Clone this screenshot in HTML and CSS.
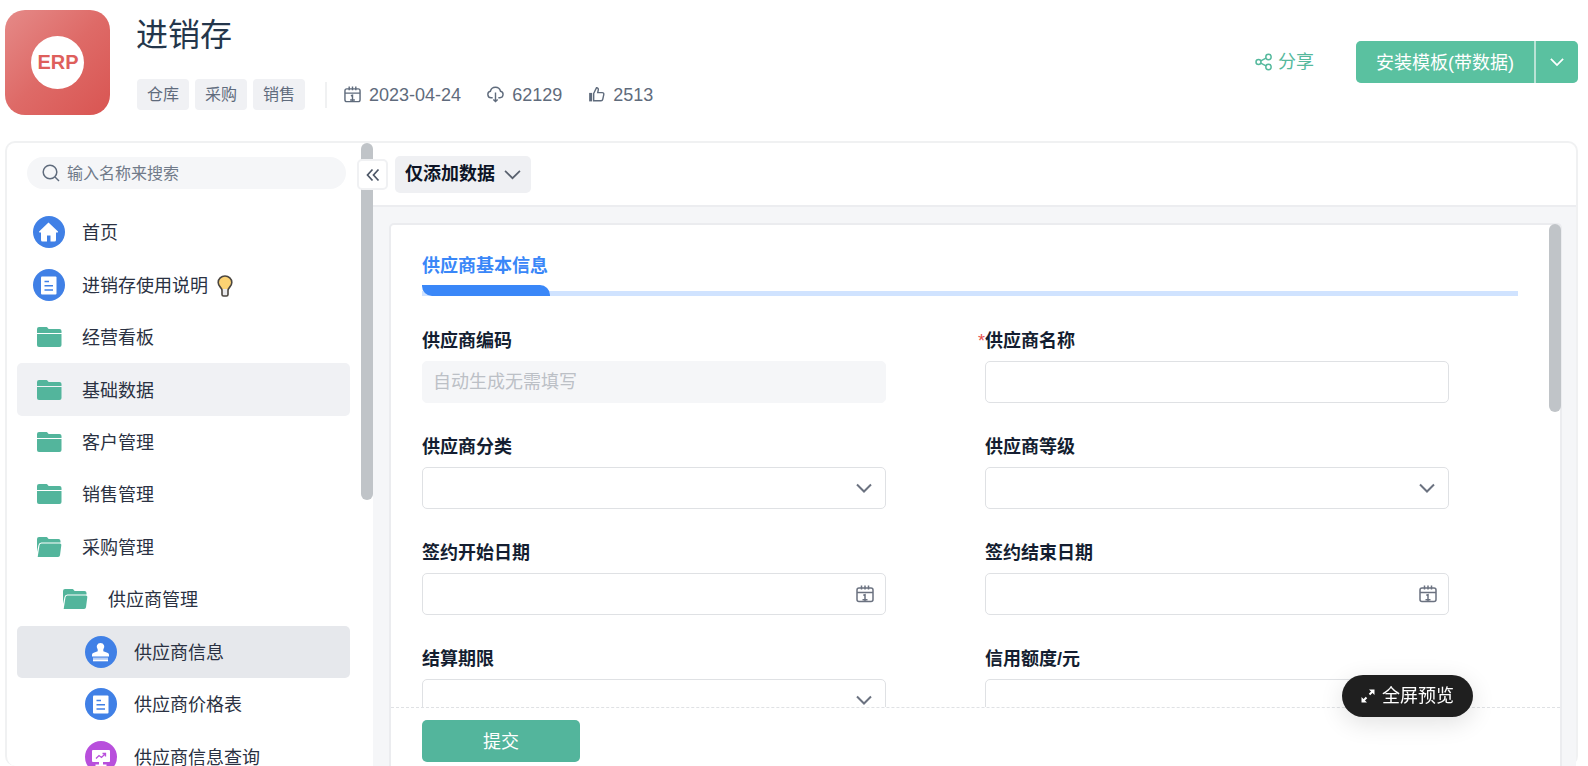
FILE: index.html
```html
<!DOCTYPE html>
<html lang="zh-CN">
<head>
<meta charset="utf-8">
<title>进销存</title>
<link rel="stylesheet" href="styles.css">
</head>
<body>
<svg class="sprite" aria-hidden="true">
  <symbol id="calendar" viewBox="0 0 18 18"><rect x="1" y="3" width="16" height="13.500" rx="2" /><path d="M1 7.500h16M5.500 .5v4M9 .5v4M12.500 .5v4M7.300 10.300 9 9.700v6.800M6.500 14.800h5" /></symbol>
  <symbol id="cloud" viewBox="0 0 18 18"><path d="M6 12.500H4.300A3.500 3.500 0 0 1 3.600 5.600 5.500 5.500 0 0 1 14.300 5.600a3.500 3.500 0 0 1-.6 6.900H12M9 7v9.500M6.700 14.200 9 16.500l2.300-2.300" /></symbol>
  <symbol id="thumb" viewBox="0 0 18 18"><path d="M6 8 9 1.800c1.500 0 2.200 1 1.900 2.300L10.300 7h4.700c1.300 0 2 .9 1.700 2.200l-1.100 5c-.2.900-.9 1.400-1.800 1.400H6z" /><path d="M2.800 7.300v9" stroke-width="3.200" /></symbol>
  <symbol id="share" viewBox="0 0 18 18"><circle cx="3.500" cy="9" r="2.500" /><circle cx="13.500" cy="4" r="2.700" /><circle cx="13.500" cy="14" r="2.700" /><path d="M5.800 7.900 11 5.200M5.800 10.100l5.200 2.700" /></symbol>
  <symbol id="chevron" viewBox="0 0 16 16"><path d="M1 4.500l7 7 7-7" /></symbol>
  <symbol id="folder" viewBox="0 0 26 22"><path d="M1 7V3a2 2 0 0 1 2-2h7.500c1 0 1.500 2 2.500 2h10.500A2 2 0 0 1 25.500 5v2z" /><path d="M1 8h24.500v11a2 2 0 0 1-2 2H3a2 2 0 0 1-2-2z" /></symbol>
  <symbol id="folder-open" viewBox="0 0 26 22"><path d="M1 16V3a2 2 0 0 1 2-2h7.500c1 0 1.500 2 2.500 2h9.500A2 2 0 0 1 24.500 5v1.500H5.500a3 3 0 0 0-3 2.500z" /><path d="M5.500 7.500h18.300a1.500 1.500 0 0 1 1.500 1.800l-1.300 10a2 2 0 0 1-2 1.700H1.700L3.500 9.200a2 2 0 0 1 2-1.700z" /></symbol>
  <symbol id="doc" viewBox="0 0 32 32"><circle cx="16" cy="16" r="16" fill="#4080e6" /><rect x="8" y="7.500" width="15.500" height="18" rx="1" fill="#fff" /><path d="M11.500 12.500h4.500M11.500 16.800h8.500M11.500 21h8.500" stroke="#4080e6" stroke-width="1.500" /></symbol>
</svg>

<header class="header">
  <svg class="logo" viewBox="0 0 105 105" role="img" aria-label="ERP">
    <defs><linearGradient id="red" x1="0" y1="0" x2="1" y2="1"><stop offset="0" stop-color="#e58a88" /><stop offset=".5" stop-color="#de6a67" /><stop offset="1" stop-color="#d95552" /></linearGradient></defs>
    <rect width="105" height="105" rx="20" fill="url(#red)" />
    <circle cx="52.500" cy="52.500" r="26.500" fill="#fff" />
    <text x="53" y="59" text-anchor="middle" class="logo-text">ERP</text>
  </svg>
  <div class="intro">
    <h1 class="title">进销存</h1>
    <div class="meta">
      <span class="tag">仓库</span><span class="tag">采购</span><span class="tag">销售</span>
      <span class="divider"></span>
      <span class="stat"><svg class="line-icon"><use href="#calendar" /></svg>2023-04-24</span>
      <span class="stat"><svg class="line-icon"><use href="#cloud" /></svg>62129</span>
      <span class="stat"><svg class="line-icon"><use href="#thumb" /></svg>2513</span>
    </div>
  </div>
  <div class="actions">
    <a class="share" href="#"><svg class="line-icon"><use href="#share" /></svg>分享</a>
    <div class="install">
      <button class="install-main" type="button">安装模板(带数据)</button>
      <button class="install-more" type="button" aria-label="更多安装方式"><svg class="chevron"><use href="#chevron" /></svg></button>
    </div>
  </div>
</header>

<div class="panel">
  <aside class="sidebar">
    <label class="search">
      <svg class="search-icon" viewBox="0 0 18 18"><circle cx="8" cy="8" r="6.800" /><path d="M13 13l4 4" /></svg>
      <input type="text" placeholder="输入名称来搜索" aria-label="输入名称来搜索">
    </label>
    <nav class="menu">
      <a class="item" href="#"><svg class="badge" viewBox="0 0 32 32"><circle cx="16" cy="16" r="16" fill="#4080e6" /><path d="M15.500 6.500 25 15.500q.5 1-.7 1H23v7.500a1.500 1.500 0 0 1-1.500 1.500H17.500v-6h-3.500v6H9.500A1.500 1.500 0 0 1 8 24v-7.500H6.800q-1.200 0-.7-1z" fill="#fff" /></svg><span class="name">首页</span></a>
      <a class="item" href="#"><svg class="badge"><use href="#doc" /></svg><span class="name with-bulb">进销存使用说明<svg class="bulb" viewBox="0 0 16 22"><path d="M5 15.500C5 12.500 1.200 11.500 1.200 7.500a6.800 6.500 0 0 1 13.600 0c0 4-3.800 5-3.800 8z" fill="#fcd373" /><path d="M5 14h6v5.500a1.500 1.500 0 0 1-1.500 1.500h-3A1.500 1.500 0 0 1 5 19.500z" fill="#e9e9ec" /><path d="M5 15.500C5 12.500 1.200 11.500 1.200 7.500a6.800 6.500 0 0 1 13.600 0c0 4-3.800 5-3.800 8v4a1.500 1.500 0 0 1-1.500 1.500h-3A1.500 1.500 0 0 1 5 19.500z" fill="none" stroke="#4b4640" stroke-width="1.600" /></svg></span></a>
      <a class="item" href="#"><svg class="folder"><use href="#folder" /></svg><span class="name">经营看板</span></a>
      <a class="item hovered" href="#"><svg class="folder"><use href="#folder" /></svg><span class="name">基础数据</span></a>
      <a class="item" href="#"><svg class="folder"><use href="#folder" /></svg><span class="name">客户管理</span></a>
      <a class="item" href="#"><svg class="folder"><use href="#folder" /></svg><span class="name">销售管理</span></a>
      <a class="item" href="#"><svg class="folder"><use href="#folder-open" /></svg><span class="name">采购管理</span></a>
      <a class="item level-2" href="#"><svg class="folder"><use href="#folder-open" /></svg><span class="name">供应商管理</span></a>
      <a class="item level-3 current" href="#" aria-current="page"><svg class="badge" viewBox="0 0 32 32"><circle cx="16" cy="16" r="16" fill="#4080e6" /><path d="M15.500 7a3.800 3.800 0 0 1 2.800 6.400v1.800l4 1.500a2 2 0 0 1 1.700 2v1.800H7v-1.800a2 2 0 0 1 1.700-2l4-1.500v-1.800A3.800 3.800 0 0 1 15.500 7z" fill="#fff" /><path d="M8 22.300h15" stroke="#b5cdf6" stroke-width="1.500" /><path d="M8 24.300h15" stroke="#fff" stroke-width="2" /></svg><span class="name">供应商信息</span></a>
      <a class="item level-3" href="#"><svg class="badge"><use href="#doc" /></svg><span class="name">供应商价格表</span></a>
      <a class="item level-3" href="#"><svg class="badge" viewBox="0 0 32 32"><circle cx="16" cy="16" r="16" fill="#b84fdc" /><rect x="7" y="9" width="18" height="12" rx="1" fill="#fff" /><path d="M14 21h4v2.500h3.500V25h-11v-1.500H14z" fill="#fff" /><path d="M11 17.500l3-3 2.500 2 4-4M17.500 12.500h3v3" fill="none" stroke="#b84fdc" stroke-width="1.300" /></svg><span class="name">供应商信息查询</span></a>
    </nav>
    <span class="scrollbar"></span>
    <button class="collapse" type="button" aria-label="收起"><svg viewBox="0 0 14 14"><path d="M6.500 1.500 1.500 7l5 5.500M12.500 1.500 7.500 7l5 5.500" /></svg></button>
  </aside>

  <main class="main">
    <div class="toolbar">
      <button class="mode" type="button">仅添加数据<svg class="chevron"><use href="#chevron" /></svg></button>
    </div>
    <div class="stage">
      <form class="card">
        <div class="form-body">
          <div class="section"><h2 class="section-title">供应商基本信息</h2></div>
          <div class="fields">
            <div class="field"><label for="code">供应商编码</label><div class="control"><input id="code" type="text" placeholder="自动生成无需填写" disabled></div></div>
            <div class="field"><label for="name" class="required">供应商名称</label><div class="control"><input id="name" type="text"></div></div>
            <div class="field"><label for="kind">供应商分类</label><div class="control"><select id="kind"><option></option></select><svg class="chevron"><use href="#chevron" /></svg></div></div>
            <div class="field"><label for="grade">供应商等级</label><div class="control"><select id="grade"><option></option></select><svg class="chevron"><use href="#chevron" /></svg></div></div>
            <div class="field"><label for="start">签约开始日期</label><div class="control"><input id="start" type="text"><svg class="line-icon"><use href="#calendar" /></svg></div></div>
            <div class="field"><label for="end">签约结束日期</label><div class="control"><input id="end" type="text"><svg class="line-icon"><use href="#calendar" /></svg></div></div>
            <div class="field"><label for="term">结算期限</label><div class="control"><select id="term"><option></option></select><svg class="chevron"><use href="#chevron" /></svg></div></div>
            <div class="field"><label for="credit">信用额度/元</label><div class="control"><input id="credit" type="text"></div></div>
          </div>
        </div>
        <div class="form-footer"><button class="submit" type="submit">提交</button></div>
        <span class="scrollbar"></span>
      </form>
    </div>
  </main>
</div>

<button class="preview" type="button"><svg viewBox="0 0 16 16"><path d="M9.500 6.500l3-3M6.500 9.500l-3 3" stroke="#fff" stroke-width="2" /><path d="M9 1.500h5.500V7zM1.500 9v5.500H7z" fill="#fff" /></svg>全屏预览</button>
</body>
</html>
```

FILE: styles.css
```css
* { box-sizing: border-box; }

body {
  display: flex;
  flex-direction: column;
  height: 100vh;
  margin: 0;
  padding: 10px 10px 0 5px;
  overflow: hidden;
  background: #fff;
  color: #141e31;
  font: 18px/24px "Liberation Sans", "Noto Sans CJK SC", sans-serif;
}

button, input, select { font: inherit; color: inherit; margin: 0; }
button { border: 0; padding: 0; cursor: pointer; }
a { color: inherit; text-decoration: none; }
svg { flex: none; }

.sprite { position: absolute; width: 0; height: 0; }
.line-icon { width: 18px; height: 18px; fill: none; stroke: currentColor; stroke-width: 1.5; }
.chevron { width: 16px; height: 16px; fill: none; stroke: #6b7280; stroke-width: 2; }

/* Header */
.header { display: flex; flex: none; height: 131px; }
.logo { width: 105px; height: 105px; }
.logo-text { font: bold 20px "Liberation Sans", sans-serif; fill: #de5f5c; }
.intro { margin-left: 26px; }
.title { margin: 0; color: #24364b; font-size: 32px; font-weight: 400; line-height: 50px; }
.meta { display: flex; align-items: center; gap: 6px; margin-top: 19px; padding-left: 1px; color: #5f6b7c; }
.tag { padding: 0 10px; border-radius: 4px; background: #f0f1f4; font-size: 16px; line-height: 31px; }
.divider { width: 2px; height: 26px; margin: 0 11px 0 14px; background: #f0f1f2; }
.stat { display: flex; align-items: center; gap: 8px; margin-right: 20px; }
.stat .line-icon { width: 17px; height: 17px; }
.actions { display: flex; gap: 42px; margin: 31px 0 0 auto; }
.share { display: flex; align-items: center; gap: 5px; height: 42px; color: #55b99d; }
.install { display: flex; gap: 2px; height: 42px; border-radius: 5px; overflow: hidden; background: #b9e3d5; }
.install-main { padding: 1px 20px 0; background: #5ac1a0; color: #fff; }
.install-more { display: grid; place-items: center; width: 42px; background: #5ac1a0; }
.install-more .chevron { width: 14px; height: 14px; stroke: #fff; }

/* Panel */
.panel {
  display: flex;
  flex: 1;
  min-height: 0;
  border: 2px solid #f0f1f2;
  border-bottom: 0;
  border-radius: 10px;
}
.sidebar { position: relative; flex: none; width: 366px; padding: 14px 23px 0 10px; }
.search {
  display: flex;
  align-items: center;
  gap: 7px;
  height: 32px;
  margin: 0 4px 17px 10px;
  padding: 0 15px;
  border-radius: 16px;
  background: #f5f6f8;
}
.search-icon { width: 18px; height: 18px; fill: none; stroke: #5f6b7c; stroke-width: 1.5; }
.search input { flex: 1; min-width: 0; padding: 2px 0 0; border: 0; background: none; font-size: 16px; }
.search input::placeholder { color: #707a89; }
.menu { display: grid; grid-auto-rows: 1fr; height: 577px; }
.item { display: flex; align-items: center; gap: 17px; padding-left: 16px; border-radius: 5px; color: #2a3142; }
.name { padding-top: 2px; }
.level-2 { padding-left: 42px; }
.level-3 { padding-left: 68px; }
.hovered { background: #f0f1f4; }
.current { background: #e6e8ec; }
.badge { width: 32px; height: 32px; }
.folder { width: 26px; height: 22px; margin: 0 3px; fill: #53b59c; }
.with-bulb { display: flex; align-items: center; gap: 9px; }
.bulb { width: 16px; height: 22px; }
.scrollbar { position: absolute; width: 12px; border-radius: 6px; background: #c0c4c8; }
.sidebar .scrollbar { top: 0; right: 0; height: 357px; }
.collapse {
  position: absolute;
  top: 16px;
  right: -15px;
  z-index: 1;
  display: grid;
  place-items: center;
  width: 31px;
  height: 31px;
  border: 2px solid #f0f1f3;
  border-radius: 5px;
  background: #fff;
}
.collapse svg { width: 14px; height: 14px; fill: none; stroke: #4b5565; stroke-width: 1.7; }

/* Main area */
.main { display: flex; flex: 1; flex-direction: column; min-width: 0; }
.toolbar { display: flex; align-items: center; flex: none; height: 64px; padding-left: 22px; border-bottom: 2px solid #ecedf0; }
.mode { display: flex; align-items: center; gap: 9px; height: 37px; padding: 0 10px; border-radius: 5px; background: #eff0f3; color: #0d1426; font-weight: 700; }
.mode .chevron { width: 17px; height: 17px; stroke: #59616e; stroke-width: 1.6; }
.stage { display: flex; flex: 1; min-height: 0; padding: 16px 14px 0 16px; background: #f5f6f8; }
.card {
  position: relative;
  display: flex;
  flex: 1;
  flex-direction: column;
  border: 2px solid #ebecef;
  border-bottom: 0;
  border-radius: 5px 5px 0 0;
  background: #fff;
}
.card .scrollbar { top: -1px; right: -1px; height: 188px; }
.form-body { flex: 1; min-height: 0; overflow: hidden; padding: 29px 12px 0 31px; }
.section { margin: 0 30px 33px 0; border-bottom: 5px solid #d0e3ff; }
.section-title {
  position: relative;
  width: max-content;
  margin: 0;
  padding: 0 2px 13px 0;
  color: #3a87f8;
  font-size: 18px;
  font-weight: 700;
  line-height: 24px;
}
.section-title::after {
  content: "";
  position: absolute;
  right: 0;
  bottom: -5px;
  left: 0;
  height: 11px;
  border-radius: 0 10px 0 10px;
  background: #3a87f8;
}
.fields { display: grid; grid-template-columns: 1fr 1fr; row-gap: 32px; }
.field { padding-right: 99px; }
.field label { display: block; width: max-content; margin-bottom: 8px; font-weight: 700; }
.required { position: relative; }
.required::before { content: "*"; position: absolute; right: 100%; color: #e8504c; font-weight: 400; }
.control { position: relative; height: 42px; }
.control input, .control select {
  width: 100%;
  height: 100%;
  padding: 0 10px;
  border: 1px solid #dfe1e4;
  border-radius: 5px;
  background: #fff;
  appearance: none;
}
.control input:disabled { border-color: #f5f6f8; background: #f5f6f8; }
.control input::placeholder { color: #bcc0c6; }
.control svg { position: absolute; top: 12px; right: 12px; color: #6b7280; pointer-events: none; }
.control .chevron { top: 13px; right: 14px; }
.form-footer { flex: none; padding: 12px 31px 4px; border-top: 1px dashed #dfe1e4; }
.submit { width: 158px; height: 42px; padding-top: 2px; border-radius: 5px; background: #53b59c; color: #fff; }

.preview {
  position: fixed;
  right: 115px;
  bottom: 49px;
  display: flex;
  align-items: center;
  gap: 6px;
  height: 42px;
  padding: 0 19px 0 18px;
  border-radius: 21px;
  background: #1f1f1f;
  box-shadow: 0 6px 24px rgba(0, 0, 0, .12);
  color: #fff;
}
.preview svg { width: 16px; height: 16px; }
```
